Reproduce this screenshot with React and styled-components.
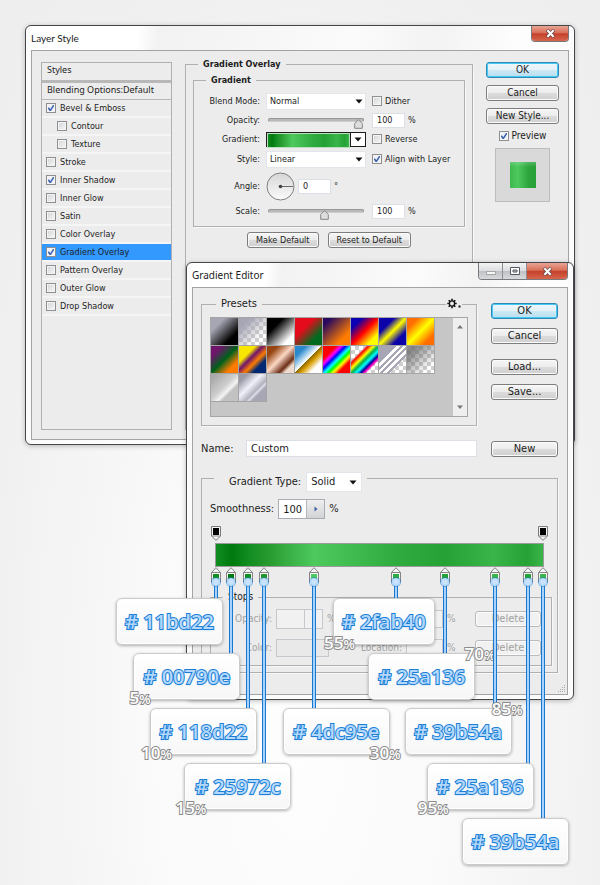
import React from 'react'
import styled, { createGlobalStyle, css } from 'styled-components'

const svgUrl = (w, h, body) =>
  `url("data:image/svg+xml,${encodeURIComponent(
    `<svg xmlns='http://www.w3.org/2000/svg' width='${w}' height='${h}' viewBox='0 0 ${w} ${h}'>${body}</svg>`
  )}")`

const arrowDown = svgUrl(8, 5, "<path d='M0.5 0.5h7L4 4.5z' fill='#111'/>")
const tick = svgUrl(9, 9, "<path d='M1.5 4.2L3.6 7.4L7.6 1.2' fill='none' stroke='#3a5fae' stroke-width='1.7'/>")
const thumb = svgUrl(
  9,
  10,
  "<path d='M4.5 0.7L8.3 4.5V9.3H0.7V4.5z' fill='#dedede' stroke='#858585'/>"
)

const GREEN_RAMP = `linear-gradient(90deg, #118d22 0%, #00790e 5%, #118d22 10%, #25972c 15%,
  #4dc95e 30%, #2fab40 55%, #25a136 70%, #39b54a 85%, #25a136 95%, #39b54a 100%)`

const GlobalStyle = createGlobalStyle`
  * {
    box-sizing: border-box;
  }

  body {
    margin: 0;
    color: #1c1c1c;
    font-family: 'DejaVu Sans Condensed', 'Noto Sans', sans-serif;
    font-size: 9px;
    line-height: 14px;
  }

  button, input, select {
    color: inherit;
    font: inherit;
    margin: 0;
  }
`

const Desktop = styled.main`
  background: radial-gradient(ellipse at 50% 82%, #fefefe 0%, #fafafa 35%, #f0f0f0 75%, #eeeeee 100%);
  min-height: 100vh;
  min-width: 600px;
  overflow: hidden;
  position: relative;
`

/* ---------- window chrome ---------- */

const Window = styled.section`
  background: #fbfbfb;
  border: 1px solid #44464a;
  border-radius: 6px;
  box-shadow: 0 1px 5px rgba(0, 0, 0, 0.25), inset 0 0 0 1px #ffffff;
  padding: 0 5px 4px;
  position: absolute;
`

const LayerStyleWindow = styled(Window)`
  left: 25px;
  right: 25px;
  top: 25px;
`

const EditorWindow = styled(Window)`
  left: 186px;
  right: 26px;
  top: 262px;
`

const TitleBar = styled.header`
  align-items: center;
  background: linear-gradient(100deg, #ffffff 20%, #f2f2f2 24%, #fbfbfb 60%, #f3f3f3 75%, #fdfdfd 90%);
  border-radius: 5px 5px 0 0;
  display: flex;
  height: 24px;
  justify-content: space-between;
`

const WindowTitle = styled.h1`
  font-family: ${props => (props.$small ? 'Lato' : "'Noto Sans'")}, 'Open Sans', sans-serif;
  font-size: 10px;
  font-weight: normal;
  line-height: 16px;
  margin: 0;
`

const WindowButtons = styled.div`
  align-self: flex-start;
  border: 1px solid #77797d;
  border-radius: 0 0 4px 4px;
  border-top: 0;
  display: flex;
  overflow: hidden;
`

const WindowButton = styled.button`
  align-items: center;
  background: linear-gradient(#f4f4f5 0%, #dcdde0 48%, #bfc1c6 52%, #d8dadd 100%);
  border: 0;
  border-right: 1px solid #8b8d91;
  display: flex;
  height: 16px;
  justify-content: center;
  padding: 0;
  width: 24px;

  ${props => props.$close && css`
    background: linear-gradient(#e9a493 0%, #d9705a 45%, #c5412a 52%, #d7654d 100%);
    border-right: 0;
    width: 40px;
  `}

  ${props => props.$short && css`
    height: 15px;
    width: 36px;
  `}
`

const Client = styled.div`
  background: #ececec;
  border: 1px solid #a3a3a3;
  display: grid;
  position: relative;
`

const LayerStyleClient = styled(Client)`
  column-gap: 13px;
  grid-template-columns: 131px minmax(0, 1fr) 73px;
  padding: 11px 9px 9px;
`

const EditorClient = styled(Client)`
  column-gap: 14px;
  grid-template-columns: minmax(0, 1fr) 67px;
  padding: 8px 9px 21px 8px;
`

/* ---------- shared controls ---------- */

const Fieldset = styled.fieldset`
  border: 1px solid #b0b0b0;
  box-shadow: 1px 1px 0 #f8f8f8;
  margin: 0;
  min-width: 0;
  padding: 0;
`

const Legend = styled.legend`
  font-weight: ${props => (props.$bold ? 'bold' : 'normal')};
  height: 14px;
  line-height: 14px;
  margin-left: ${props => props.$indent || 12}px;
  padding: 0 5px;
`

const PushButton = styled.button`
  background: linear-gradient(#f6f6f6 0%, #ececec 48%, #dcdcdc 52%, #cfcfcf 100%);
  border: 1px solid #7d7d7d;
  border-radius: 3px;
  box-shadow: inset 0 0 0 1px #fbfbfb;
  font-size: ${props => (props.$large ? 11 : props.$medium ? 10 : 9)}px;
  height: 16px;
  line-height: 14px;
  padding: 0 8px;
  white-space: nowrap;

  ${props => props.$primary && css`
    background: linear-gradient(#eef7fb 0%, #e3f1f8 48%, #cfe8f4 52%, #b8deef 100%);
    border-color: #3089b5;
    box-shadow: inset 0 0 0 1px #43c9f5;
  `}

  &:disabled {
    background: #f1f1f1;
    border-color: #b8babd;
    color: #a0a0a0;
    padding: 0;
  }
`

const CheckBox = styled.input.attrs({ type: 'checkbox' })`
  appearance: none;
  background: linear-gradient(135deg, #d2d4d8, #f7f7f7);
  border: 1px solid #8e8f8f;
  box-shadow: inset 0 0 0 1px #f4f4f4;
  flex: none;
  height: 10px;
  width: 10px;

  &:checked {
    background: ${tick} center / 8px 8px no-repeat, #eef1f6;
  }
`

const CheckLabel = styled.label`
  align-items: center;
  display: flex;
  font-size: ${props => (props.$medium ? 10 : 9)}px;
  gap: 3px;
  white-space: nowrap;
`

const Select = styled.select`
  appearance: none;
  background: ${arrowDown} right 2px center / 8px 5px no-repeat, #ffffff;
  border: 1px solid #e3e5ea;
  border-radius: 0;
  height: 17px;
  line-height: 14px;
  outline: none;
  padding: 0 12px 0 3px;
  width: 100%;

  ${props => props.$large && css`
    background-position: right 4px center;
    font-size: 11px;
    height: 20px;
    padding-left: 4px;
    width: 56px;
  `}
`

const TextField = styled.input.attrs({ type: 'text' })`
  background: #ffffff;
  border: 1px solid #dcdfe6;
  height: ${props => (props.$large ? 17 : 15)}px;
  min-width: 0;
  padding: 0 4px;
  width: ${props => (props.$large ? '100%' : '33px')};
  ${props => props.$large && 'font-size: 11px;'}
`

const Inline = styled.div`
  align-items: center;
  display: flex;
  gap: ${props => props.$gap || 3}px;
`

/* ---------- layer style dialog ---------- */

const StylesPanel = styled.aside`
  background: #ececec;
  border: 1px solid #b0b0b0;
  min-height: 368px;
`

const StylesHeading = styled.h2`
  border-bottom: ${props => (props.$double ? 3 : 1)}px solid #b8b8b8;
  font-family: 'Noto Sans', 'Open Sans', sans-serif;
  font-size: 9px;
  font-weight: normal;
  height: ${props => (props.$double ? 20 : 17)}px;
  line-height: 13px;
  margin: 0;
  padding-left: 5px;
  white-space: nowrap;
`

const StyleList = styled.ul`
  list-style: none;
  margin: 0;
  padding: 0;
`

const StyleRow = styled.li`
  background: ${props => (props.$selected ? '#3399ff' : 'transparent')};
  border-bottom: 2px solid #f5f5f5;
  height: 18px;
  padding-left: ${props => (props.$nested ? 15 : 4)}px;

  label {
    gap: 4px;
    height: 16px;
  }
`

const OverlayFieldset = styled(Fieldset)`
  margin-top: -5px;
  padding: 2px 7px 0;
`

const OptionGrid = styled.div`
  align-items: center;
  column-gap: 6px;
  display: grid;
  grid-template-columns: 66px 100px minmax(0, 1fr);
  grid-template-rows: 20px 18px 20px 20px 34px 16px;
  padding: 4px 0 7px;
`

const OptionLabel = styled.label`
  text-align: right;
  white-space: nowrap;
`

const Slider = styled.input.attrs({ type: 'range' })`
  appearance: none;
  background: transparent;
  height: 12px;
  margin-left: 2px;
  width: 96px;

  &::-webkit-slider-runnable-track {
    background: #b9b9b9;
    border: 1px solid #989898;
    border-bottom-color: #cccccc;
    border-radius: 2px;
    height: 4px;
  }

  &::-webkit-slider-thumb {
    appearance: none;
    background: ${thumb} no-repeat;
    height: 10px;
    width: 9px;
  }
`

const GradientPicker = styled.button`
  background: #ffffff;
  border: 1px solid #1c1c1c;
  display: flex;
  height: 15px;
  padding: 0;
  width: 100%;

  &:before {
    background: ${GREEN_RAMP};
    border: 1px solid #b9dfbf;
    content: '';
    flex: 1;
    height: 13px;
  }

  &:after {
    background: ${arrowDown} center / 8px 5px no-repeat;
    border-left: 1px solid #1c1c1c;
    content: '';
    height: 13px;
    width: 14px;
  }
`

const ButtonPair = styled.div`
  display: flex;
  gap: 9px;
  justify-content: center;
  margin-top: 5px;
`

const SideColumn = styled.div`
  display: flex;
  flex-direction: column;
  gap: 7px;
`

const PreviewLabel = styled(CheckLabel)`
  align-self: center;
  margin-top: -2px;
`

const PreviewBox = styled.div`
  align-items: center;
  align-self: center;
  background: #d9d9d9;
  border: 1px solid #bcbcbc;
  display: flex;
  height: 54px;
  justify-content: center;
  margin-top: -2px;
  width: 55px;

  &:after {
    background: linear-gradient(rgba(255, 255, 255, 0.2), transparent 20%),
      linear-gradient(90deg, #3cb84c, #4dc95e 30%, #2ea53e 70%, #25a136);
    content: '';
    height: 26px;
    width: 26px;
  }
`

/* ---------- gradient editor ---------- */

const PresetsFieldset = styled(Fieldset)`
  padding: 5px 8px 8px;
  position: relative;
`

const LargeLegend = styled(Legend)`
  font-size: 11px;
  height: 16px;
  line-height: 16px;
  margin-left: 6px;
`

const PresetMenu = styled.button`
  align-items: center;
  background: #ececec;
  border: 0;
  display: flex;
  padding: 0 1px;
  position: absolute;
  right: 14px;
  top: -14px;
`

const PresetList = styled.div`
  background: #c6c6c6;
  border: 1px solid #a5a5a5;
  display: flex;
  height: 100px;
  justify-content: space-between;
`

const Swatches = styled.div`
  align-content: start;
  display: grid;
  grid-template-columns: repeat(8, 28px);
  grid-auto-rows: 28px;
`

const Swatch = styled.button`
  background: ${props => props.$fill};
  border: solid #a5a5a5;
  border-width: 0 1px 1px 0;
  padding: 0;
`

const ScrollBar = styled.div`
  align-items: center;
  background: #efefef;
  display: flex;
  flex-direction: column;
  justify-content: space-between;
  padding: 6px 0;
  width: 14px;
`

const EditorButtons = styled.div`
  display: flex;
  flex-direction: column;
  gap: 9px;
  padding-top: 7px;

  button:nth-child(3) {
    margin-top: 6px;
  }
`

const NameRow = styled.div`
  align-items: center;
  display: grid;
  font-size: 11px;
  grid-template-columns: 45px minmax(0, 1fr);
  margin-top: 14px;
`

const NewButton = styled(PushButton)`
  align-self: end;
`

const TypeFieldset = styled(Fieldset)`
  grid-column: 1 / -1;
  margin-top: 7px;
  padding: 7px 5px 6px 8px;
`

const TypeLegend = styled.legend`
  align-items: center;
  display: flex;
  font-size: 11px;
  gap: 5px;
  height: 28px;
  margin-left: 4px;
  padding: 8px 5px 0 15px;
`

const SmoothRow = styled.div`
  align-items: center;
  display: flex;
  font-size: 11px;
  gap: 4px;
`

const StepperField = styled.div`
  border: 1px solid #a9acb3;
  display: flex;
  flex: none;
  height: 20px;
  width: 47px;

  input {
    border: 0;
    height: 18px;
    min-width: 0;
    padding: 0 0 0 4px;
    width: 27px;
  }

  button {
    align-items: center;
    background: linear-gradient(#eeeeee, #d2d3d6);
    border: 0;
    border-left: 1px solid #b4b6bb;
    display: flex;
    flex: 1;
    justify-content: center;
    padding: 0;
  }

  ${props => props.$dim && css`
    border-color: #c6c8cd;

    input, button {
      background: #f1f1f1;
      border-color: #c6c8cd;
    }
  `}
`

const Ramp = styled.div`
  margin: 7px 8px 0 5px;
  padding: 17px 0;
  position: relative;
  z-index: 2;
`

const RampBar = styled.div`
  background: ${GREEN_RAMP};
  border: 1px solid #9a9a9a;
  height: 24px;
`

// the first and last stops lean inward so they stay over the bar
const centred = half => props =>
  props.$at === 0 ? 1 - half : props.$at === 100 ? -1 - half : -half

const OpacityStop = styled.div`
  left: ${props => props.$at}%;
  margin-left: ${centred(6)}px;
  position: absolute;
  top: 0;
`

const StopsFieldset = styled(Fieldset)`
  margin-top: 6px;
  padding: 5px 10px 7px 0;
`

const StopsLegend = styled(Legend)`
  font-size: 10px;
`

const StopsGrid = styled.div`
  align-items: center;
  color: #a3a3a3;
  column-gap: 4px;
  display: grid;
  font-size: 10px;
  grid-template-columns: 61px 53px minmax(0, 1fr) 37px 24px 66px;
  row-gap: 9px;
  grid-auto-rows: 20px;

  > label {
    text-align: right;
  }
`

const LocationField = styled(TextField)`
  background: #f1f1f1;
  border-color: #c6c8cd;
  height: 18px;
  width: 100%;
`

const ColorWell = styled.button`
  background: #e9e9e9;
  border: 1px solid #c6c8cd;
  height: 18px;
  padding: 0;
  width: 100%;
`

const SizeGrip = styled.svg`
  bottom: 1px;
  position: absolute;
  right: 1px;
`

/* ---------- colour stop callouts ---------- */

const ColorStop = styled.div`
  left: ${props => props.$at}%;
  position: absolute;
  top: 41px;
  width: 0;
`

const StopMarker = styled.svg`
  display: block;
  margin-left: ${centred(6)}px;
`

const Leader = styled.div`
  background: #a8d2fb;
  border: solid #1779cf;
  border-width: 0 1px;
  height: ${props => 17 + props.$tier * 55}px;
  left: ${centred(2)}px;
  position: absolute;
  top: 15px;
  width: 4px;

  &:before {
    background: radial-gradient(#c9e3fd 30%, #9ccbfa);
    border-radius: 50%;
    box-shadow: 0 0 0 1px rgba(23, 121, 207, 0.55);
    content: '';
    height: 8px;
    left: -3px;
    position: absolute;
    top: -4px;
    width: 8px;
  }
`

const Card = styled.div`
  background: linear-gradient(#ffffff, #f7f7f7);
  border: 1px solid #cbcbcb;
  border-radius: 6px;
  box-shadow: 0 1px 3px rgba(0, 0, 0, 0.3), inset 0 0 0 1px #ffffff;
  height: 47px;
  left: ${props => props.$shift}px;
  position: absolute;
  text-align: center;
  top: ${props => 31 + props.$tier * 55}px;
  width: ${props => (props.$narrow ? 102 : 107)}px;
`

const HexCode = styled.span`
  -webkit-text-stroke: 2px #1b7fd6;
  color: #b4d8fc;
  font-family: 'Open Sans', 'Noto Sans', sans-serif;
  font-size: 20px;
  font-weight: 600;
  line-height: 46px;
  paint-order: stroke fill;
  text-shadow: 0 1px 2px rgba(27, 127, 214, 0.4);
  white-space: nowrap;
`

const corners = {
  bl: 'bottom: -11px; left: -11px;',
  br: 'bottom: -11px; right: -13px;',
  tr: 'top: -11px; right: -13px;',
  trOut: 'top: -11px; right: -22px;'
}

const Percent = styled.span`
  -webkit-text-stroke: 2px #8c8c8c;
  color: #ffffff;
  font-family: 'Open Sans', 'Noto Sans', sans-serif;
  font-size: 17px;
  font-weight: 600;
  line-height: 22px;
  min-width: 33px;
  paint-order: stroke fill;
  position: absolute;
  white-space: nowrap;
  ${props => corners[props.$corner]}

  small {
    font-size: 13px;
  }
`

const effects = [
  { name: 'Bevel & Emboss', on: true },
  { name: 'Contour', nested: true },
  { name: 'Texture', nested: true },
  { name: 'Stroke' },
  { name: 'Inner Shadow', on: true },
  { name: 'Inner Glow' },
  { name: 'Satin' },
  { name: 'Color Overlay' },
  { name: 'Gradient Overlay', on: true, selected: true },
  { name: 'Pattern Overlay' },
  { name: 'Outer Glow' },
  { name: 'Drop Shadow' }
]

const checker = 'repeating-conic-gradient(#cfcfcf 0 25%, #ffffff 0 50%) 0 0 / 8px 8px'

const presets = [
  ['Foreground to Background', 'linear-gradient(135deg, #a6a6b4 25%, #000000 75%)'],
  ['Foreground to Transparent', `linear-gradient(135deg, #a6a6b4 20%, rgba(166, 166, 180, 0) 75%), ${checker}`],
  ['Black, White', 'linear-gradient(135deg, #000000 30%, #ffffff 80%)'],
  ['Red, Green', 'linear-gradient(135deg, #e60b1c 35%, #006b1f 75%)'],
  ['Violet, Orange', 'linear-gradient(135deg, #2a0a5e 15%, #ff7c00 75%)'],
  ['Blue, Red, Yellow', 'linear-gradient(135deg, #0a00b2 20%, #ff0000 50%, #fffc00 80%)'],
  ['Blue, Yellow, Blue', 'linear-gradient(135deg, #0b02aa 28%, #fdfa02 50%, #0b02aa 75%)'],
  ['Orange, Yellow, Orange', 'linear-gradient(135deg, #ff6e02 20%, #ffff00 50%, #ff6d00 80%)'],
  ['Violet, Green, Orange', 'linear-gradient(135deg, #6f156c 20%, #00601b 50%, #fd7c00 78%)'],
  ['Yellow, Violet, Orange, Blue', 'linear-gradient(135deg, #f9e600 30%, #6f156c 44%, #fd7c00 60%, #002874 75%)'],
  ['Copper', 'linear-gradient(135deg, #974612 20%, #fbd8c5 48%, #6c2e16 72%, #efdbcd 82%)'],
  ['Chrome', 'linear-gradient(135deg, #2989cc 20%, #ffffff 48%, #906a00 50%, #d99f00 60%, #ffffff 78%)'],
  ['Spectrum', 'linear-gradient(135deg, #ff0000 24%, #ff00ff 34%, #0000ff 42%, #00ffff 52%, #00ff00 60%, #ffff00 68%, #ff0000 78%)'],
  ['Transparent Rainbow', `linear-gradient(135deg, transparent 27%, #ff0000 32%, #ffff00 42%, #00b050 51%, #00ffff 60%, #0000a0 68%, #ff00c0 74%, transparent 79%), ${checker}`],
  ['Transparent Stripes', `linear-gradient(135deg, #a6a6b4 0 33%, #ffffff 33% 39%, #a6a6b4 39% 45%, #ffffff 45% 51%, #a6a6b4 51% 57%, #ffffff 57% 63%, #a6a6b4 63% 69%, transparent 69%), ${checker}`],
  ['Neutral Density', `linear-gradient(135deg, rgba(110, 110, 110, 0.8) 20%, transparent 80%), ${checker}`],
  ['Silver', 'linear-gradient(135deg, #a9a9a9 10%, #cfcfcf 48%, #f4f4f4 62%, #c2c2c2 70%)'],
  ['Steel', 'linear-gradient(135deg, #9a9aa8 15%, #f1f1fa 42%, #b1b1bd 62%, #dedee8 67%, #a6a6b4 74%)']
]

const stops = [
  { at: 0, hex: '11bd22', color: '#118d22', tier: 0, shift: -99 },
  { at: 5, hex: '00790e', color: '#00790e', tier: 1, shift: -98, corner: 'bl' },
  { at: 10, hex: '118d22', color: '#118d22', tier: 2, shift: -98, corner: 'bl' },
  { at: 15, hex: '25972c', color: '#25972c', tier: 3, shift: -80, corner: 'bl' },
  { at: 30, hex: '4dc95e', color: '#4dc95e', tier: 2, shift: -31, corner: 'br' },
  { at: 55, hex: '2fab40', color: '#2fab40', tier: 0, shift: -63, corner: 'bl', narrow: true },
  { at: 70, hex: '25a136', color: '#25a136', tier: 1, shift: -77, corner: 'trOut' },
  { at: 85, hex: '39b54a', color: '#39b54a', tier: 2, shift: -90, corner: 'tr' },
  { at: 95, hex: '25a136', color: '#25a136', tier: 3, shift: -101, corner: 'bl' },
  { at: 100, hex: '39b54a', color: '#39b54a', tier: 4, shift: -82 }
]

const CloseIcon = () => (
  <svg width="11" height="9" viewBox="0 0 11 9" aria-hidden="true">
    <path d="M2 1L9 8M9 1L2 8" stroke="#6b4a48" strokeWidth="3.6" />
    <path d="M2.4 1.2L8.6 7.8M8.6 1.2L2.4 7.8" stroke="#ffffff" strokeWidth="2" />
  </svg>
)

const GearIcon = () => (
  <svg width="14" height="11" viewBox="0 0 14 11" aria-hidden="true">
    <circle cx="5" cy="5.5" r="2.6" fill="none" stroke="#111111" strokeWidth="1.3" />
    <path
      d="M5 0.8v2M5 8.2v2M0.3 5.5h2M7.7 5.5h2M1.7 2.2l1.4 1.4M6.9 7.4l1.4 1.4M8.3 2.2L6.9 3.6M3.1 7.4L1.7 8.8"
      stroke="#111111"
      strokeWidth="1.6"
    />
    <path d="M11.5 7.5h2v2h-2z" fill="#111111" />
  </svg>
)

const ScrollArrow = ({ up }) => (
  <svg width="8" height="5" viewBox="0 0 8 5" aria-hidden="true">
    <path d={up ? 'M1 4.5h6L4 1z' : 'M1 0.5h6L4 4z'} fill="#777777" />
  </svg>
)

const StepArrow = () => (
  <svg width="4" height="6" viewBox="0 0 4 6" aria-hidden="true">
    <path d="M0.5 0.5v5L3.5 3z" fill="#3f62a8" />
  </svg>
)

const AngleDial = () => (
  <svg width="29" height="29" viewBox="0 0 29 29" role="img" aria-label="Angle dial">
    <defs>
      <linearGradient id="dial" x1="0" y1="0" x2="0" y2="1">
        <stop offset="0" stopColor="#d6d6d6" />
        <stop offset="1" stopColor="#fbfbfb" />
      </linearGradient>
    </defs>
    <circle cx="14.5" cy="14.5" r="13.5" fill="url(#dial)" stroke="#7f7f7f" />
    <path d="M14 14.5h13" stroke="#6a6a6a" />
    <circle cx="14.5" cy="14.5" r="1.8" fill="#444444" />
  </svg>
)

const LayerStyleDialog = () => (
  <LayerStyleWindow>
    <TitleBar>
      <WindowTitle $small>Layer Style</WindowTitle>
      <WindowButtons>
        <WindowButton $close $short aria-label="Close"><CloseIcon /></WindowButton>
      </WindowButtons>
    </TitleBar>
    <LayerStyleClient>
      <StylesPanel>
        <StylesHeading $double>Styles</StylesHeading>
        <StylesHeading>Blending Options:Default</StylesHeading>
        <StyleList>
          {effects.map(effect => (
            <StyleRow key={effect.name} $nested={effect.nested} $selected={effect.selected}>
              <CheckLabel>
                <CheckBox defaultChecked={effect.on} />
                {effect.name}
              </CheckLabel>
            </StyleRow>
          ))}
        </StyleList>
      </StylesPanel>

      <OverlayFieldset>
        <Legend $bold $indent={5}>Gradient Overlay</Legend>
        <Fieldset>
          <Legend $bold>Gradient</Legend>
          <OptionGrid>
            <OptionLabel htmlFor="blend">Blend Mode:</OptionLabel>
            <Select id="blend"><option>Normal</option></Select>
            <CheckLabel><CheckBox />Dither</CheckLabel>

            <OptionLabel htmlFor="opacity">Opacity:</OptionLabel>
            <Slider id="opacity" defaultValue={100} />
            <Inline><TextField defaultValue="100" aria-label="Opacity percent" />%</Inline>

            <OptionLabel htmlFor="gradient">Gradient:</OptionLabel>
            <GradientPicker id="gradient" />
            <CheckLabel><CheckBox />Reverse</CheckLabel>

            <OptionLabel htmlFor="style">Style:</OptionLabel>
            <Select id="style"><option>Linear</option></Select>
            <CheckLabel><CheckBox defaultChecked />Align with Layer</CheckLabel>

            <OptionLabel htmlFor="angle">Angle:</OptionLabel>
            <Inline><AngleDial /><TextField id="angle" defaultValue="0" />°</Inline>
            <span />

            <OptionLabel htmlFor="scale">Scale:</OptionLabel>
            <Slider id="scale" defaultValue={60} />
            <Inline><TextField defaultValue="100" aria-label="Scale percent" />%</Inline>
          </OptionGrid>
        </Fieldset>
        <ButtonPair>
          <PushButton>Make Default</PushButton>
          <PushButton>Reset to Default</PushButton>
        </ButtonPair>
      </OverlayFieldset>

      <SideColumn>
        <PushButton $medium $primary>OK</PushButton>
        <PushButton $medium>Cancel</PushButton>
        <PushButton $medium>New Style...</PushButton>
        <PreviewLabel $medium><CheckBox defaultChecked />Preview</PreviewLabel>
        <PreviewBox />
      </SideColumn>
    </LayerStyleClient>
  </LayerStyleWindow>
)

const StopCallout = ({ stop }) => (
  <ColorStop $at={stop.at}>
    <StopMarker $at={stop.at} width="12" height="16" viewBox="0 0 12 16" aria-hidden="true">
      <path d="M6 0.7L10.5 5.5V15H1.5V5.5z" fill="#f5f5f5" stroke="#858585" />
      <path d="M1.5 5.5h9" stroke="#858585" />
      <path d="M3 7h6v8H3z" fill={stop.color} />
    </StopMarker>
    <Leader $tier={stop.tier} $at={stop.at} />
    <Card $tier={stop.tier} $shift={stop.shift} $narrow={stop.narrow}>
      <HexCode># {stop.hex}</HexCode>
      {stop.corner && <Percent $corner={stop.corner}>{stop.at}<small>%</small></Percent>}
    </Card>
  </ColorStop>
)

const GradientEditor = () => (
  <EditorWindow>
    <TitleBar>
      <WindowTitle>Gradient Editor</WindowTitle>
      <WindowButtons>
        <WindowButton aria-label="Minimize">
          <svg width="12" height="10" viewBox="0 0 12 10"><path d="M1.5 5.5h9v3h-9z" fill="#f5f5f5" stroke="#a5a5a8" /></svg>
        </WindowButton>
        <WindowButton aria-label="Maximize">
          <svg width="12" height="10" viewBox="0 0 12 10">
            <path d="M1.5 1.5h9v7h-9z" fill="#ffffff" stroke="#55575f" />
            <path d="M4 4h4v2H4z" fill="#d0d0d0" stroke="#55575f" />
          </svg>
        </WindowButton>
        <WindowButton $close aria-label="Close"><CloseIcon /></WindowButton>
      </WindowButtons>
    </TitleBar>
    <EditorClient>
      <PresetsFieldset>
        <LargeLegend>Presets</LargeLegend>
        <PresetMenu aria-label="Preset menu"><GearIcon /></PresetMenu>
        <PresetList>
          <Swatches>
            {presets.map(([name, fill]) => <Swatch key={name} $fill={fill} aria-label={name} />)}
          </Swatches>
          <ScrollBar><ScrollArrow up /><ScrollArrow /></ScrollBar>
        </PresetList>
      </PresetsFieldset>
      <EditorButtons>
        <PushButton $large $primary>OK</PushButton>
        <PushButton $large>Cancel</PushButton>
        <PushButton $large>Load...</PushButton>
        <PushButton $large>Save...</PushButton>
      </EditorButtons>

      <NameRow>
        <label htmlFor="name">Name:</label>
        <TextField id="name" $large defaultValue="Custom" />
      </NameRow>
      <NewButton $large>New</NewButton>

      <TypeFieldset>
        <TypeLegend>
          <label htmlFor="type">Gradient Type:</label>
          <Select id="type" $large><option>Solid</option></Select>
        </TypeLegend>
        <SmoothRow>
          <label htmlFor="smoothness">Smoothness:</label>
          <StepperField>
            <input id="smoothness" type="text" defaultValue="100" />
            <button aria-label="Adjust smoothness"><StepArrow /></button>
          </StepperField>
          %
        </SmoothRow>

        <Ramp>
          {[0, 100].map(at => (
            <OpacityStop key={at} $at={at}>
              <svg width="12" height="15" viewBox="0 0 12 15" aria-hidden="true">
                <path d="M1.5 0.5h9V10L6 14.3L1.5 10z" fill="#f5f5f5" stroke="#7a7a7a" />
                <path d="M3 2h6v7H3z" fill="#000000" />
                <path d="M1.5 10h9" stroke="#858585" />
              </svg>
            </OpacityStop>
          ))}
          <RampBar />
          {stops.map(stop => <StopCallout key={stop.at} stop={stop} />)}
        </Ramp>

        <StopsFieldset disabled>
          <StopsLegend>Stops</StopsLegend>
          <StopsGrid>
            <label htmlFor="stop-opacity">Opacity:</label>
            <Inline $gap={4}>
              <StepperField $dim>
                <input id="stop-opacity" type="text" />
                <button aria-label="Adjust opacity" />
              </StepperField>
              %
            </Inline>
            <span />
            <LocationField aria-label="Opacity stop location" />
            <span>%</span>
            <PushButton $large disabled>Delete</PushButton>

            <label htmlFor="stop-color">Color:</label>
            <ColorWell id="stop-color" />
            <label htmlFor="color-location">Location:</label>
            <LocationField id="color-location" />
            <span>%</span>
            <PushButton $large disabled>Delete</PushButton>
          </StopsGrid>
        </StopsFieldset>
      </TypeFieldset>
      <SizeGrip width="8" height="8" viewBox="0 0 8 8" aria-hidden="true">
        <path d="M6 0h1v1H6zM4 2h1v1H4zM6 2h1v1H6zM2 4h1v1H2zM4 4h1v1H4zM6 4h1v1H6zM0 6h1v1H0zM2 6h1v1H2zM4 6h1v1H4zM6 6h1v1H6z" fill="#aaaaaa" />
      </SizeGrip>
    </EditorClient>
  </EditorWindow>
)

export default function App() {
  return (
    <Desktop>
      <GlobalStyle />
      <LayerStyleDialog />
      <GradientEditor />
    </Desktop>
  )
}
